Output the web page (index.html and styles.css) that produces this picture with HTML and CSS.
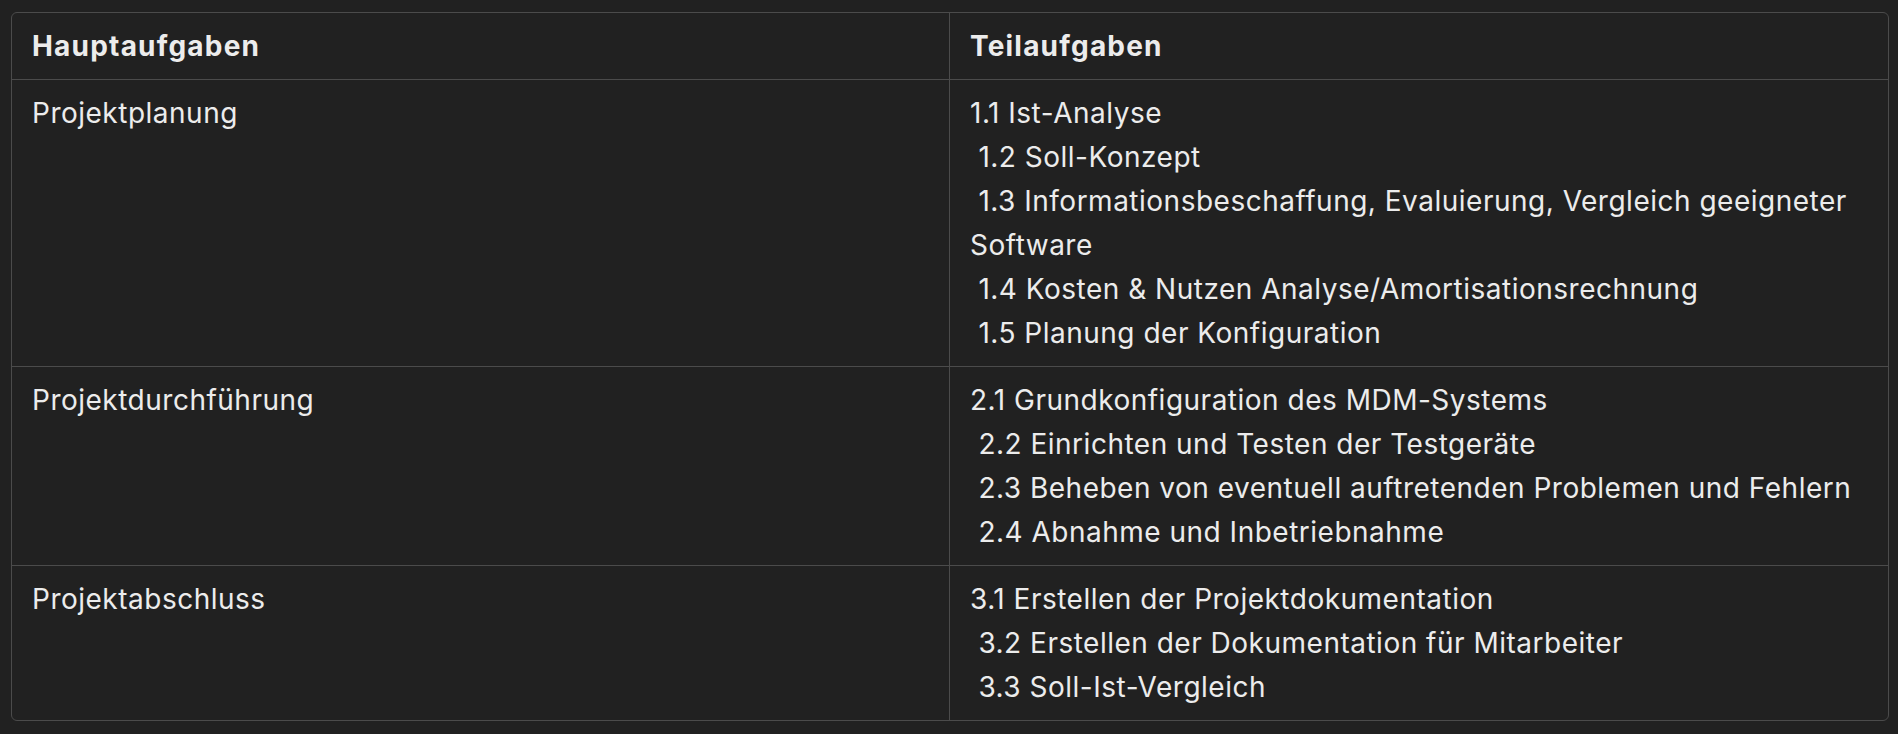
FILE: index.html
```html
<!DOCTYPE html>
<html lang="de">
<head>
<meta charset="utf-8">
<title>Aufgaben</title>
<link rel="stylesheet" href="styles.css">
</head>
<body>
<table class="tasks">
  <thead>
    <tr>
      <th>Hauptaufgaben</th>
      <th>Teilaufgaben</th>
    </tr>
  </thead>
  <tbody>
    <tr>
      <td>Projektplanung</td>
      <td>1.1 Ist-Analyse<br>&nbsp;1.2 Soll-Konzept<br>&nbsp;1.3 Informationsbeschaffung, Evaluierung, Vergleich geeigneter Software<br>&nbsp;1.4 Kosten &amp; Nutzen Analyse/Amortisationsrechnung<br>&nbsp;1.5 Planung der Konfiguration</td>
    </tr>
    <tr>
      <td>Projektdurchführung</td>
      <td>2.1 Grundkonfiguration des MDM-Systems<br>&nbsp;2.2 Einrichten und Testen der Testgeräte<br>&nbsp;2.3 Beheben von eventuell auftretenden Problemen und Fehlern<br>&nbsp;2.4 Abnahme und Inbetriebnahme</td>
    </tr>
    <tr>
      <td>Projektabschluss</td>
      <td>3.1 Erstellen der Projektdokumentation<br>&nbsp;3.2 Erstellen der Dokumentation für Mitarbeiter<br>&nbsp;3.3 Soll-Ist-Vergleich</td>
    </tr>
  </tbody>
</table>
</body>
</html>
```

FILE: styles.css
```css
html, body {
  background: #212121;
}
body {
  margin: 12px 9px 0 11px;
  font-family: Inter, "Noto Sans", sans-serif;
  color: #ececec;
}
.tasks {
  width: 100%;
  border-collapse: separate;
  border-spacing: 0;
  border: 1px solid #4b4b4b;
  border-radius: 6px;
  table-layout: fixed;
  font-size: 28px;
  line-height: 44px;
  letter-spacing: 0.5px;
}
.tasks th,
.tasks td {
  text-align: left;
  vertical-align: top;
  padding: 11px 20px;
  border-bottom: 1px solid #4b4b4b;
}
.tasks th {
  font-weight: 700;
  letter-spacing: 1.2px;
}
.tasks th:first-child,
.tasks td:first-child {
  border-right: 1px solid #4b4b4b;
}
.tasks tbody tr:last-child td {
  border-bottom: none;
}
```
